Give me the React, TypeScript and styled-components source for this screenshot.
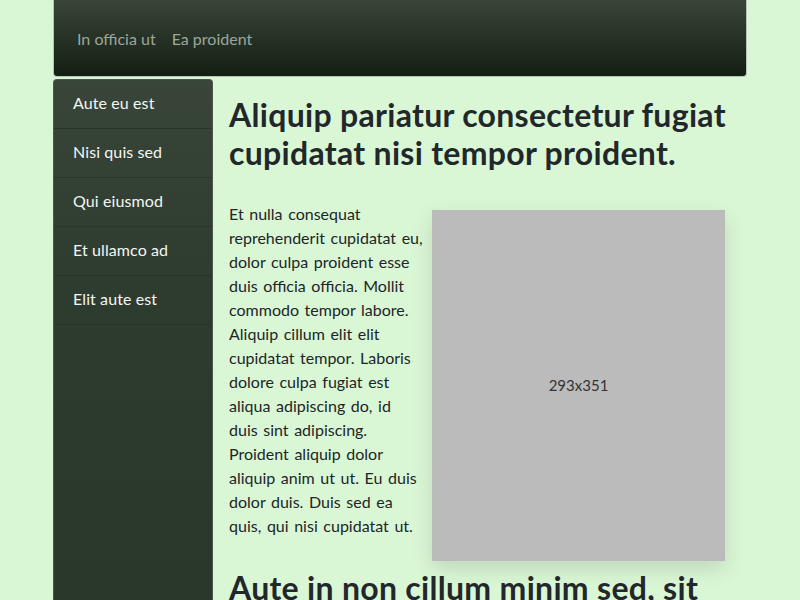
import React from "react";
import styled, { createGlobalStyle } from "styled-components";

const Global = createGlobalStyle`
  html, body { margin: 0; padding: 0; }
  body {
    background: #daf7d5;
    font-family: "Segoe UI", Lato, "Noto Sans", sans-serif;
    color: #212529;
    font-size: 16px;
    line-height: 1.5;
    overflow: hidden;
  }
  * { box-sizing: border-box; }
`;

const Page = styled.div`
  width: 694px;
  margin: 0 auto;
  height: 600px;
  display: flex;
  flex-direction: column;
`;

const Navbar = styled.nav`
  height: 77px;
  flex: none;
  border: 1px solid #b9c2b8;
  border-top: none;
  border-radius: 0 0 4px 4px;
  background: linear-gradient(to bottom, #384538 0%, #131f13 100%);
  display: flex;
  align-items: center;
  padding: 2px 15px 0;
`;

const NavLink = styled.a`
  color: #9da69c;
  padding: 8px;
  font-size: 16px;
  text-decoration: none;
`;

const Body = styled.div`
  flex: 1;
  display: flex;
  margin-top: 2px;
  min-height: 0;
`;

const Sidebar = styled.aside`
  width: 160px;
  flex: none;
  background: linear-gradient(to bottom, #384538 0%, #2e3b2f 40%, #2a372b 100%);
  border-radius: 4px 4px 0 0;
  border: 1px solid #4b574a;
  border-bottom: none;
  display: flex;
  flex-direction: column;
`;

const SideItem = styled.div`
  padding: 11px 19px 13px;
  color: #f4f6f4;
  border-bottom: 1px solid #2a352a;
  font-size: 16px;
  line-height: 24px;
  letter-spacing: 0.1px;
`;

const Main = styled.main`
  flex: 1;
  padding: 17px 16px 0 16px;
  min-width: 0;
`;

const Title = styled.h2`
  font-size: 32px;
  font-weight: 700;
  line-height: 1.2;
  letter-spacing: 0.3px;
  margin: 0 0 29px;
  color: #22272b;
`;

const Row = styled.div`
  display: flex;
  gap: 9px;
  align-items: flex-start;
`;

const Para = styled.p`
  flex: 1;
  margin: 0;
  font-size: 16px;
  line-height: 24px;
  word-spacing: 1.5px;
`;

const Placeholder = styled.div<{ $w: number; $h: number }>`
  flex: none;
  width: ${(p) => p.$w}px;
  height: ${(p) => p.$h}px;
  margin: 8px 6px 8px 0;
  background: #bbbbbb;
  box-shadow: 0 8px 20px rgba(0, 0, 0, 0.13);
  display: flex;
  align-items: center;
  justify-content: center;
  color: #333;
  font-size: 15px;
`;

export default function App() {
  const items = ["Aute eu est", "Nisi quis sed", "Qui eiusmod", "Et ullamco ad", "Elit aute est"];
  return (
    <>
      <Global />
      <Page>
        <Navbar>
          <NavLink>In officia ut</NavLink>
          <NavLink>Ea proident</NavLink>
        </Navbar>
        <Body>
          <Sidebar>
            {items.map((t) => (
              <SideItem key={t}>{t}</SideItem>
            ))}
          </Sidebar>
          <Main>
            <Title>Aliquip pariatur consectetur fugiat cupidatat nisi tempor proident.</Title>
            <Row>
              <Para>
                Et nulla consequat reprehenderit cupidatat eu, dolor culpa proident esse duis officia officia.
                Mollit commodo tempor labore. Aliquip cillum elit elit cupidatat tempor. Laboris dolore culpa
                fugiat est aliqua adipiscing do, id duis sint adipiscing. Proident aliquip dolor aliquip anim ut
                ut. Eu duis dolor duis. Duis sed ea quis, qui nisi cupidatat ut.
              </Para>
              <Placeholder $w={293} $h={351}>293x351</Placeholder>
            </Row>
            <Title>Aute in non cillum minim sed, sit</Title>
          </Main>
        </Body>
      </Page>
    </>
  );
}
